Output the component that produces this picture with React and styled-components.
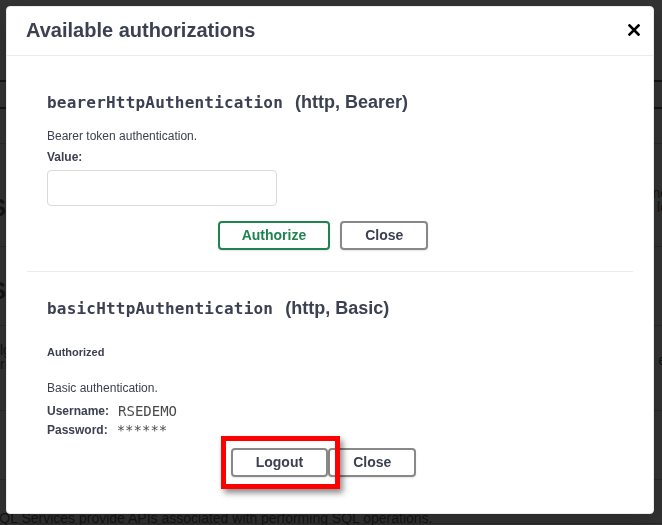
import React from "react"
import styled, { createGlobalStyle } from "styled-components"

const GlobalStyle = createGlobalStyle`
  html, body {
    margin: 0;
    padding: 0;
    background: #333333;
    overflow: hidden;
  }
  body {
    font-family: "Liberation Sans", Arial, sans-serif;
  }
  * {
    box-sizing: border-box;
  }
`

// dimmed swagger page behind the modal
const Page = styled.div`
  width: 100%;
  height: 525px;
  overflow: hidden;
  color: #141414;
`
const PageRow = styled.div`
  height: ${(p) => p.h}px;
  border-bottom: ${(p) => p.line || 1}px solid ${(p) => p.color || "#2a2a2a"};
  display: flex;
  justify-content: space-between;
  align-items: flex-start;
  padding-top: ${(p) => p.pt || 0}px;
`
const PageHeading = styled.div`
  font-size: 24px;
  font-weight: 700;
  margin-left: -10px;
`
const PageText = styled.div`
  font-size: 14px;
  line-height: 14px;
  margin: ${(p) => p.m || "0"};
  text-align: ${(p) => (p.right ? "right" : "left")};
`

const Overlay = styled.div`
  position: fixed;
  inset: 0;
  padding: 6px;
`
const Modal = styled.div`
  width: 648px;
  height: 508px;
  background: #ffffff;
  border: 1px solid #ebebeb;
  border-radius: 4px;
  box-shadow: 0 10px 30px 0 rgba(0, 0, 0, 0.2);
  overflow: hidden;
  color: #3b4151;
`
const Header = styled.div`
  display: flex;
  align-items: center;
  padding: 11px 0 13px;
  border-bottom: 1px solid #ebebeb;
`
const Title = styled.h3`
  flex: 1;
  margin: 0;
  padding: 0 19px;
  font-size: 20px;
  line-height: 24px;
  font-weight: 700;
  color: #3b4151;
`
const CloseX = styled.button`
  border: none;
  background: none;
  padding: 0;
  margin-right: 13px;
  width: 12px;
  height: 12px;
  display: flex;
  cursor: pointer;
`
const Content = styled.div`
  padding: 20px 20px 0;
`
const AuthContainer = styled.div`
  padding: 10px 20px ${(p) => (p.last ? 0 : 11)}px;
  margin-bottom: 10px;
  border-bottom: ${(p) => (p.last ? "none" : "1px solid #ebebeb")};
`
const SchemeTitle = styled.h4`
  margin: 5px 0 15px;
  font-size: 18px;
  line-height: 22px;
  font-weight: 700;
  color: #3b4151;
  display: flex;
  align-items: baseline;
`
const SchemeName = styled.code`
  font-family: "DejaVu Sans Mono", "Liberation Mono", monospace;
  font-size: 16px;
  letter-spacing: 0.2px;
  font-weight: 700;
  margin-right: 12px;
`
const Desc = styled.p`
  margin: 0;
  font-size: 12px;
  line-height: 15px;
`
const Label = styled.label`
  display: block;
  margin-top: 6px;
  font-size: 12px;
  line-height: 14px;
  font-weight: 700;
`
const Input = styled.input`
  display: block;
  margin-top: 6px;
  width: 230px;
  height: 36px;
  padding: 8px 10px;
  border: 1px solid #d9d9d9;
  border-radius: 4px;
  background: #fff;
  font-size: 14px;
`
const StatusTitle = styled.h6`
  margin: 26px 0 22px;
  font-size: 11px;
  line-height: 13px;
  font-weight: 700;
  color: #3b4151;
`
const Fields = styled.div`
  margin-top: 5px;
`
const Field = styled.div`
  display: flex;
  align-items: center;
  height: 19px;
  font-size: 12px;
`
const FieldLabel = styled.span`
  font-weight: 700;
`
const FieldValue = styled.code`
  font-family: "DejaVu Sans Mono", "Liberation Mono", monospace;
  font-size: 14px;
  color: #4a4a4a;
  margin-left: 9px;
`
const ButtonRow = styled.div`
  display: flex;
  justify-content: center;
  padding: ${(p) => p.pt}px ${(p) => p.pr}px 10px 0;
`
const Btn = styled.button`
  font-family: "Liberation Sans", Arial, sans-serif;
  font-size: 14px;
  line-height: 15px;
  font-weight: 700;
  padding: 5px ${(p) => (p.primary ? 22 : 23)}px;
  margin-right: ${(p) => p.mr || 0}px;
  background: transparent;
  border: 2px solid ${(p) => (p.primary ? "#1f8350" : "#888888")};
  color: ${(p) => (p.primary ? "#1f8350" : "#3b4151")};
  border-radius: 4px;
  box-shadow: 0 1px 2px rgba(0, 0, 0, 0.1);
  cursor: pointer;
`
const Marked = styled.span`
  position: relative;
  display: inline-flex;
`
const Highlight = styled.span`
  position: absolute;
  left: -10px;
  top: -12px;
  width: 119px;
  height: 53px;
  border: 5px solid #ff0000;
  box-shadow: 3px 4px 6px rgba(0, 0, 0, 0.45);
  pointer-events: none;
  z-index: 2;
`

const CloseIcon = () => (
  <svg width="12" height="12" viewBox="0 0 12 12">
    <path d="M1.5 1.5 L10.5 10.5 M10.5 1.5 L1.5 10.5" stroke="#000" strokeWidth="2.6" strokeLinecap="square" />
  </svg>
)

export default function App() {
  return (
    <>
      <GlobalStyle />
      <Page>
        <PageRow h={82} line={2} color="#151515" />
        <PageRow h={27} line={2} color="#151515" />
        <PageRow h={35} />
        <PageRow h={103} pt={50}>
          <PageHeading>SQL</PageHeading>
          <PageText right m="-8px -6px 0 0">
            one<br />lo
          </PageText>
        </PageRow>
        <PageRow h={79} pt={30}>
          <PageHeading>Se</PageHeading>
        </PageRow>
        <PageRow h={85} pt={17}>
          <PageText>
            lg<br />rr
          </PageText>
          <PageText right m="10px -4px 0 0">e</PageText>
        </PageRow>
        <PageRow h={69} />
        <PageRow h={44} pt={31}>
          <PageText m="0 0 0 -10px">SQL Services provide APIs associated with performing SQL operations.</PageText>
        </PageRow>
      </Page>

      <Overlay>
        <Modal>
          <Header>
            <Title>Available authorizations</Title>
            <CloseX aria-label="Close">
              <CloseIcon />
            </CloseX>
          </Header>
          <Content>
            <AuthContainer>
              <SchemeTitle>
                <SchemeName>bearerHttpAuthentication</SchemeName>(http, Bearer)
              </SchemeTitle>
              <Desc>Bearer token authentication.</Desc>
              <Label>Value:</Label>
              <Input type="text" />
              <ButtonRow pt={15} pr={14}>
                <Btn primary mr={10}>Authorize</Btn>
                <Btn>Close</Btn>
              </ButtonRow>
            </AuthContainer>

            <AuthContainer last>
              <SchemeTitle>
                <SchemeName>basicHttpAuthentication</SchemeName>(http, Basic)
              </SchemeTitle>
              <StatusTitle>Authorized</StatusTitle>
              <Desc>Basic authentication.</Desc>
              <Fields>
                <Field>
                  <FieldLabel>Username:</FieldLabel>
                  <FieldValue>RSEDEMO</FieldValue>
                </Field>
                <Field>
                  <FieldLabel>Password:</FieldLabel>
                  <FieldValue>******</FieldValue>
                </Field>
              </Fields>
              <ButtonRow pt={9} pr={13}>
                <Marked>
                  <Btn>Logout</Btn>
                  <Highlight />
                </Marked>
                <Btn>Close</Btn>
              </ButtonRow>
            </AuthContainer>
          </Content>
        </Modal>
      </Overlay>
    </>
  )
}
